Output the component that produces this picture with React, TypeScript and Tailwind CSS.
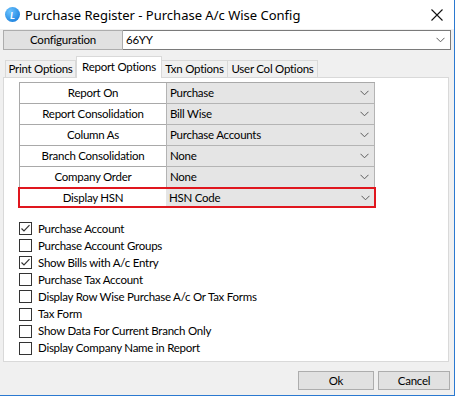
import React from 'react'

const font = { fontFamily: 'Lato, "Noto Sans", Arial, sans-serif' }

const filas = [
  { label: 'Report On', value: 'Purchase' },
  { label: 'Report Consolidation', value: 'Bill Wise' },
  { label: 'Column As', value: 'Purchase Accounts' },
  { label: 'Branch Consolidation', value: 'None' },
  { label: 'Company Order', value: 'None' },
]

const opciones = [
  { label: 'Purchase Account', checked: true },
  { label: 'Purchase Account Groups', checked: false },
  { label: 'Show Bills with A/c Entry', checked: true },
  { label: 'Purchase Tax Account', checked: false },
  { label: 'Display Row Wise Purchase A/c Or Tax Forms', checked: false },
  { label: 'Tax Form', checked: false },
  { label: 'Show Data For Current Branch Only', checked: false },
  { label: 'Display Company Name in Report', checked: false },
]

// texto base de los controles (parecido a Segoe UI 8.25pt)
const txt = 'text-[11.5px] leading-[14px] tracking-[-0.25px] text-black'

function Chevron() {
  return (
    <svg width="9" height="6" viewBox="0 0 9 6" className="shrink-0">
      <path d="M0.5 0.8 L4.5 4.8 L8.5 0.8" fill="none" stroke="#5c5c5c" strokeWidth="1" />
    </svg>
  )
}

function Fila({ label, value }: { label: string; value: string }) {
  return (
    <div className="flex h-[21px]">
      <div className={`flex w-[147px] items-center justify-center whitespace-nowrap border-b border-l border-[#a9a9a9] bg-white ${txt}`}>
        {label}
      </div>
      <div className={`flex w-[209px] items-center justify-between whitespace-nowrap border-b border-l border-r border-[#b4b4b4] bg-[#e5e5e5] pl-[3px] pr-[5px] ${txt}`}>
        <span>{value}</span>
        <Chevron />
      </div>
    </div>
  )
}

function Check({ checked }: { checked: boolean }) {
  return (
    <span className="flex h-[13px] w-[13px] shrink-0 items-center justify-center border border-[#333] bg-white">
      {checked && (
        <svg width="11" height="11" viewBox="0 0 11 11">
          <path d="M1.5 5.5 L4 8 L9.5 2.2" fill="none" stroke="#333" strokeWidth="1.2" />
        </svg>
      )}
    </span>
  )
}

function Tab({ label, className }: { label: string; className: string }) {
  return (
    <div className={`flex items-center justify-center whitespace-nowrap border-[#d9d9d9] ${txt} ${className}`}>
      {label}
    </div>
  )
}

export default function App() {
  return (
    <div className="h-[397px] w-[458px] overflow-hidden bg-white" style={font}>
      <div className="flex h-[396px] w-[455px] flex-col border-b border-r border-[#2b79d0] bg-[#f0f0f0]">
        {/* barra de titulo */}
        <div className="flex h-[29px] items-center bg-white pl-[5px] pr-[10px]">
          <span className="flex h-[15px] w-[15px] items-center justify-center rounded-full bg-[radial-gradient(circle_at_35%_30%,#6cc4ff,#0a72d6)] text-[10px] font-bold italic leading-none text-white">
            L
          </span>
          <span className="ml-[5px] whitespace-nowrap text-[13px] leading-[16px] text-black" style={{ fontFamily: '"Noto Sans", sans-serif' }}>
            Purchase Register - Purchase A/c Wise Config
          </span>
          <svg width="12" height="12" viewBox="0 0 12 12" className="ml-auto mr-[1px]">
            <path d="M0.5 0.5 L11.5 11.5 M11.5 0.5 L0.5 11.5" stroke="#111" strokeWidth="1.1" />
          </svg>
        </div>

        {/* configuracion */}
        <div className="ml-[3px] mt-[1px] flex h-[20px]">
          <div className={`flex w-[120px] items-center justify-center border border-[#adadad] bg-[#e1e1e1] ${txt}`}>
            Configuration
          </div>
          <div className={`flex w-[328px] items-center justify-between border border-l-0 border-[#7a7a7a] bg-white pl-[3px] pr-[5px] ${txt}`}>
            <span>66YY</span>
            <Chevron />
          </div>
        </div>

        {/* pestañas */}
        <div className="ml-[5px] mt-[6px] flex h-[21px] items-end">
          <Tab label="Print Options" className="h-[17px] w-[71px] border border-b-0 bg-[#f0f0f0]" />
          <Tab label="Report Options" className="relative z-10 -mb-[1px] h-[22px] w-[86px] border border-b-0 bg-white pb-[2px]" />
          <Tab label="Txn Options" className="h-[17px] w-[66px] border border-b-0 border-l-0 bg-[#f0f0f0]" />
          <Tab label="User Col Options" className="h-[17px] w-[90px] border border-b-0 border-l-0 bg-[#f0f0f0]" />
        </div>

        <div className="ml-[3px] flex h-[285px] w-[446px] flex-col border border-[#d9d9d9] bg-white pl-[15px] pt-[4px]">
          <div className="flex w-[356px] flex-col border-t border-[#a9a9a9]">
            {filas.map((f) => (
              <Fila key={f.label} label={f.label} value={f.value} />
            ))}
            <div className="-ml-[1px] -mt-[1px] flex h-[21px] w-[358px] border-2 border-[#e0161e]">
              <div className={`flex w-[146px] items-center justify-center bg-white ${txt}`}>Display HSN</div>
              <div className={`flex flex-1 items-center justify-between bg-[#e5e5e5] pl-[3px] pr-[4px] ${txt}`}>
                <span>HSN Code</span>
                <Chevron />
              </div>
            </div>
          </div>

          <div className="mt-[12px] flex flex-col">
            {opciones.map((o) => (
              <div key={o.label} className="flex h-[17.1px] items-center gap-[6px]">
                <Check checked={o.checked} />
                <span className={`whitespace-nowrap ${txt}`}>{o.label}</span>
              </div>
            ))}
          </div>
        </div>

        {/* botones */}
        <div className="mt-[9px] flex justify-end gap-[4px] pr-[4px]">
          <button className={`flex h-[19px] w-[76px] items-center justify-center border border-[#adadad] bg-[#e1e1e1] ${txt}`}>
            Ok
          </button>
          <button className={`flex h-[19px] w-[72px] items-center justify-center border border-[#adadad] bg-[#e1e1e1] ${txt}`}>
            Cancel
          </button>
        </div>
      </div>
    </div>
  )
}
